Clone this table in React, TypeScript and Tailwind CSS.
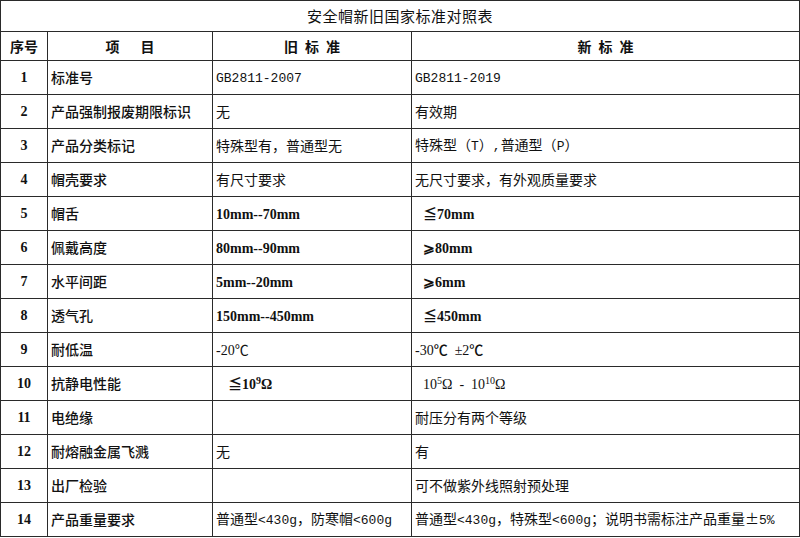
import React from "react";

type Row = {
  no: string;
  item: string;
  oldStd: React.ReactNode;
  newStd: React.ReactNode;
};

const cjk = "font-['Noto_Sans_CJK_SC',sans-serif]";
const mono = "font-['Liberation_Mono','Noto_Sans_CJK_SC',monospace] text-[13px]";
const serifBold = "font-['Liberation_Serif','Noto_Sans_CJK_SC',serif] font-bold";

const rows: Row[] = [
  { no: "1", item: "标准号", oldStd: <span className={mono}>GB2811-2007</span>, newStd: <span className={mono}>GB2811-2019</span> },
  { no: "2", item: "产品强制报废期限标识", oldStd: "无", newStd: "有效期" },
  {
    no: "3",
    item: "产品分类标记",
    oldStd: "特殊型有，普通型无",
    newStd: (
      <>
        特殊型（<span className={mono}>T</span>）<span className={mono}>,</span>普通型（<span className={mono}>P</span>）
      </>
    ),
  },
  { no: "4", item: "帽壳要求", oldStd: "有尺寸要求", newStd: "无尺寸要求，有外观质量要求" },
  {
    no: "5",
    item: "帽舌",
    oldStd: <span className={serifBold}>10mm--70mm</span>,
    newStd: <span className={`${serifBold} pl-2`}>≦70mm</span>,
  },
  {
    no: "6",
    item: "佩戴高度",
    oldStd: <span className={serifBold}>80mm--90mm</span>,
    newStd: <span className={`${serifBold} pl-2`}>⩾80mm</span>,
  },
  {
    no: "7",
    item: "水平间距",
    oldStd: <span className={serifBold}>5mm--20mm</span>,
    newStd: <span className={`${serifBold} pl-2`}>⩾6mm</span>,
  },
  {
    no: "8",
    item: "透气孔",
    oldStd: <span className={serifBold}>150mm--450mm</span>,
    newStd: <span className={`${serifBold} pl-2`}>≦450mm</span>,
  },
  {
    no: "9",
    item: "耐低温",
    oldStd: <span className="font-['Liberation_Serif','Noto_Sans_CJK_SC',serif]">-20℃</span>,
    newStd: <span className="font-['Liberation_Serif','Noto_Sans_CJK_SC',serif] font-medium">-30℃&nbsp;&nbsp;±2℃</span>,
  },
  {
    no: "10",
    item: "抗静电性能",
    oldStd: (
      <span className={`${serifBold} pl-3`}>
        ≦10<sup className="text-[10px]">9</sup>Ω
      </span>
    ),
    newStd: (
      <span className="font-['Liberation_Serif',serif] pl-2">
        10<sup className="text-[10px]">5</sup>Ω&nbsp;&nbsp;-&nbsp;&nbsp;10<sup className="text-[10px]">10</sup>Ω
      </span>
    ),
  },
  { no: "11", item: "电绝缘", oldStd: "", newStd: "耐压分有两个等级" },
  { no: "12", item: "耐熔融金属飞溅", oldStd: "无", newStd: "有" },
  { no: "13", item: "出厂检验", oldStd: "", newStd: "可不做紫外线照射预处理" },
  {
    no: "14",
    item: "产品重量要求",
    oldStd: (
      <>
        普通型<span className={mono}>&lt;430g</span>，防寒帽<span className={mono}>&lt;600g</span>
      </>
    ),
    newStd: (
      <>
        普通型<span className={mono}>&lt;430g</span>，特殊型<span className={mono}>&lt;600g</span>；说明书需标注产品重量±<span className={mono}>5%</span>
      </>
    ),
  },
];

const cell = "border border-[#2a2a2a] px-[3px] align-middle";

export default function App() {
  return (
    <div className={`w-[800px] h-[538px] bg-white overflow-hidden ${cjk} text-[14px] text-[#111]`}>
      <table className="w-[800px] table-fixed border-collapse">
        <colgroup>
          <col className="w-[47px]" />
          <col className="w-[165px]" />
          <col className="w-[199px]" />
          <col />
        </colgroup>
        <tbody>
          <tr className="h-[31px]">
            <td
              colSpan={4}
              className={`${cell} text-center text-[15px] tracking-[0.5px]`}
            >
              安全帽新旧国家标准对照表
            </td>
          </tr>
          <tr className="h-[29px] font-bold">
            <td className={`${cell} text-center`}>序号</td>
            <td className={`${cell} text-center`}>项&emsp;&ensp;目</td>
            <td className={`${cell} text-center`}>旧&ensp;标&ensp;准</td>
            <td className={`${cell} text-center`}>新&ensp;标&ensp;准</td>
          </tr>
          {rows.map((r) => (
            <tr key={r.no} className="h-[34px]">
              <td className={`${cell} text-center ${serifBold} text-[14px]`}>{r.no}</td>
              <td className={`${cell} font-medium`}>{r.item}</td>
              <td className={`${cell} whitespace-nowrap`}>{r.oldStd}</td>
              <td className={`${cell} whitespace-nowrap`}>{r.newStd}</td>
            </tr>
          ))}
        </tbody>
      </table>
    </div>
  );
}
